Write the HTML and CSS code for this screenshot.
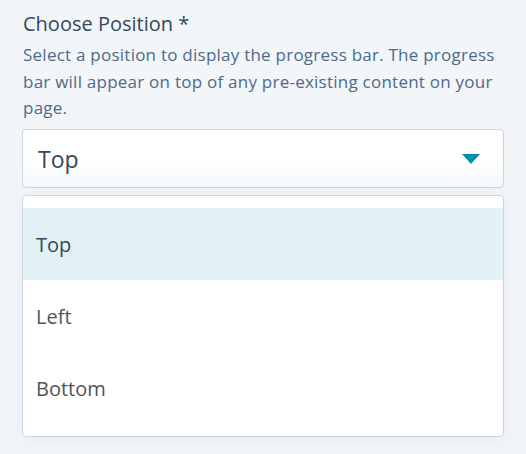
FILE: index.html
```html
<!DOCTYPE html>
<html>
<head>
<meta charset="utf-8">
<link rel="stylesheet" href="styles.css">
</head>
<body>
<div class="field">
  <label class="label">Choose Position *</label>
  <p class="help">Select a position to display the progress bar. The progress bar will appear on top of any pre-existing content on your page.</p>
  <div class="select">
    <span class="value">Top</span>
    <svg class="caret" width="18" height="10" viewBox="0 0 18 10"><path d="M0 0 H18 L9 10 Z" fill="#0091ae"/></svg>
  </div>
  <ul class="menu">
    <li class="option active">Top</li>
    <li class="option">Left</li>
    <li class="option">Bottom</li>
  </ul>
</div>
</body>
</html>
```
FILE: styles.css
```css
html, body { margin: 0; padding: 0; }
body {
  background: #f3f6f9;
  font-family: "Open Sans", Lato, sans-serif;
  width: 526px;
  height: 454px;
  overflow: hidden;
}
.field {
  padding: 11px 22px 0 22px;
  display: flex;
  flex-direction: column;
}
.label {
  font-size: 20px;
  line-height: 26px;
  color: #33475b;
  padding-left: 1px;
}
.help {
  margin: 5px 0 0 0;
  padding-left: 1px;
  font-size: 17px;
  letter-spacing: 0.24px;
  line-height: 26.7px;
  color: #4d6a89;
}
.select {
  box-sizing: border-box;
  margin-top: 7px;
  height: 59px;
  border: 1px solid #cbd6e2;
  border-radius: 4px;
  background: linear-gradient(#ffffff 55%, #f6f8fa);
  display: flex;
  align-items: center;
  justify-content: space-between;
  padding: 0 23px 0 15px;
}
.value {
  font-size: 23px;
  color: #33475b;
}
.caret { display: block; margin-top: 1px; }
.menu {
  list-style: none;
  margin: 7px 0 0 0;
  padding: 12px 0;
  background: #fff;
  border: 1px solid #cbd6e2;
  border-radius: 4px;
  box-shadow: 0 2px 18px rgba(45, 62, 80, 0.07);
}
.option {
  height: 72px;
  display: flex;
  align-items: center;
  padding-left: 13px;
  font-size: 20px;
  color: #505459;
}
.option.active {
  background: #e1f1f6;
  color: #33475b;
}
```
